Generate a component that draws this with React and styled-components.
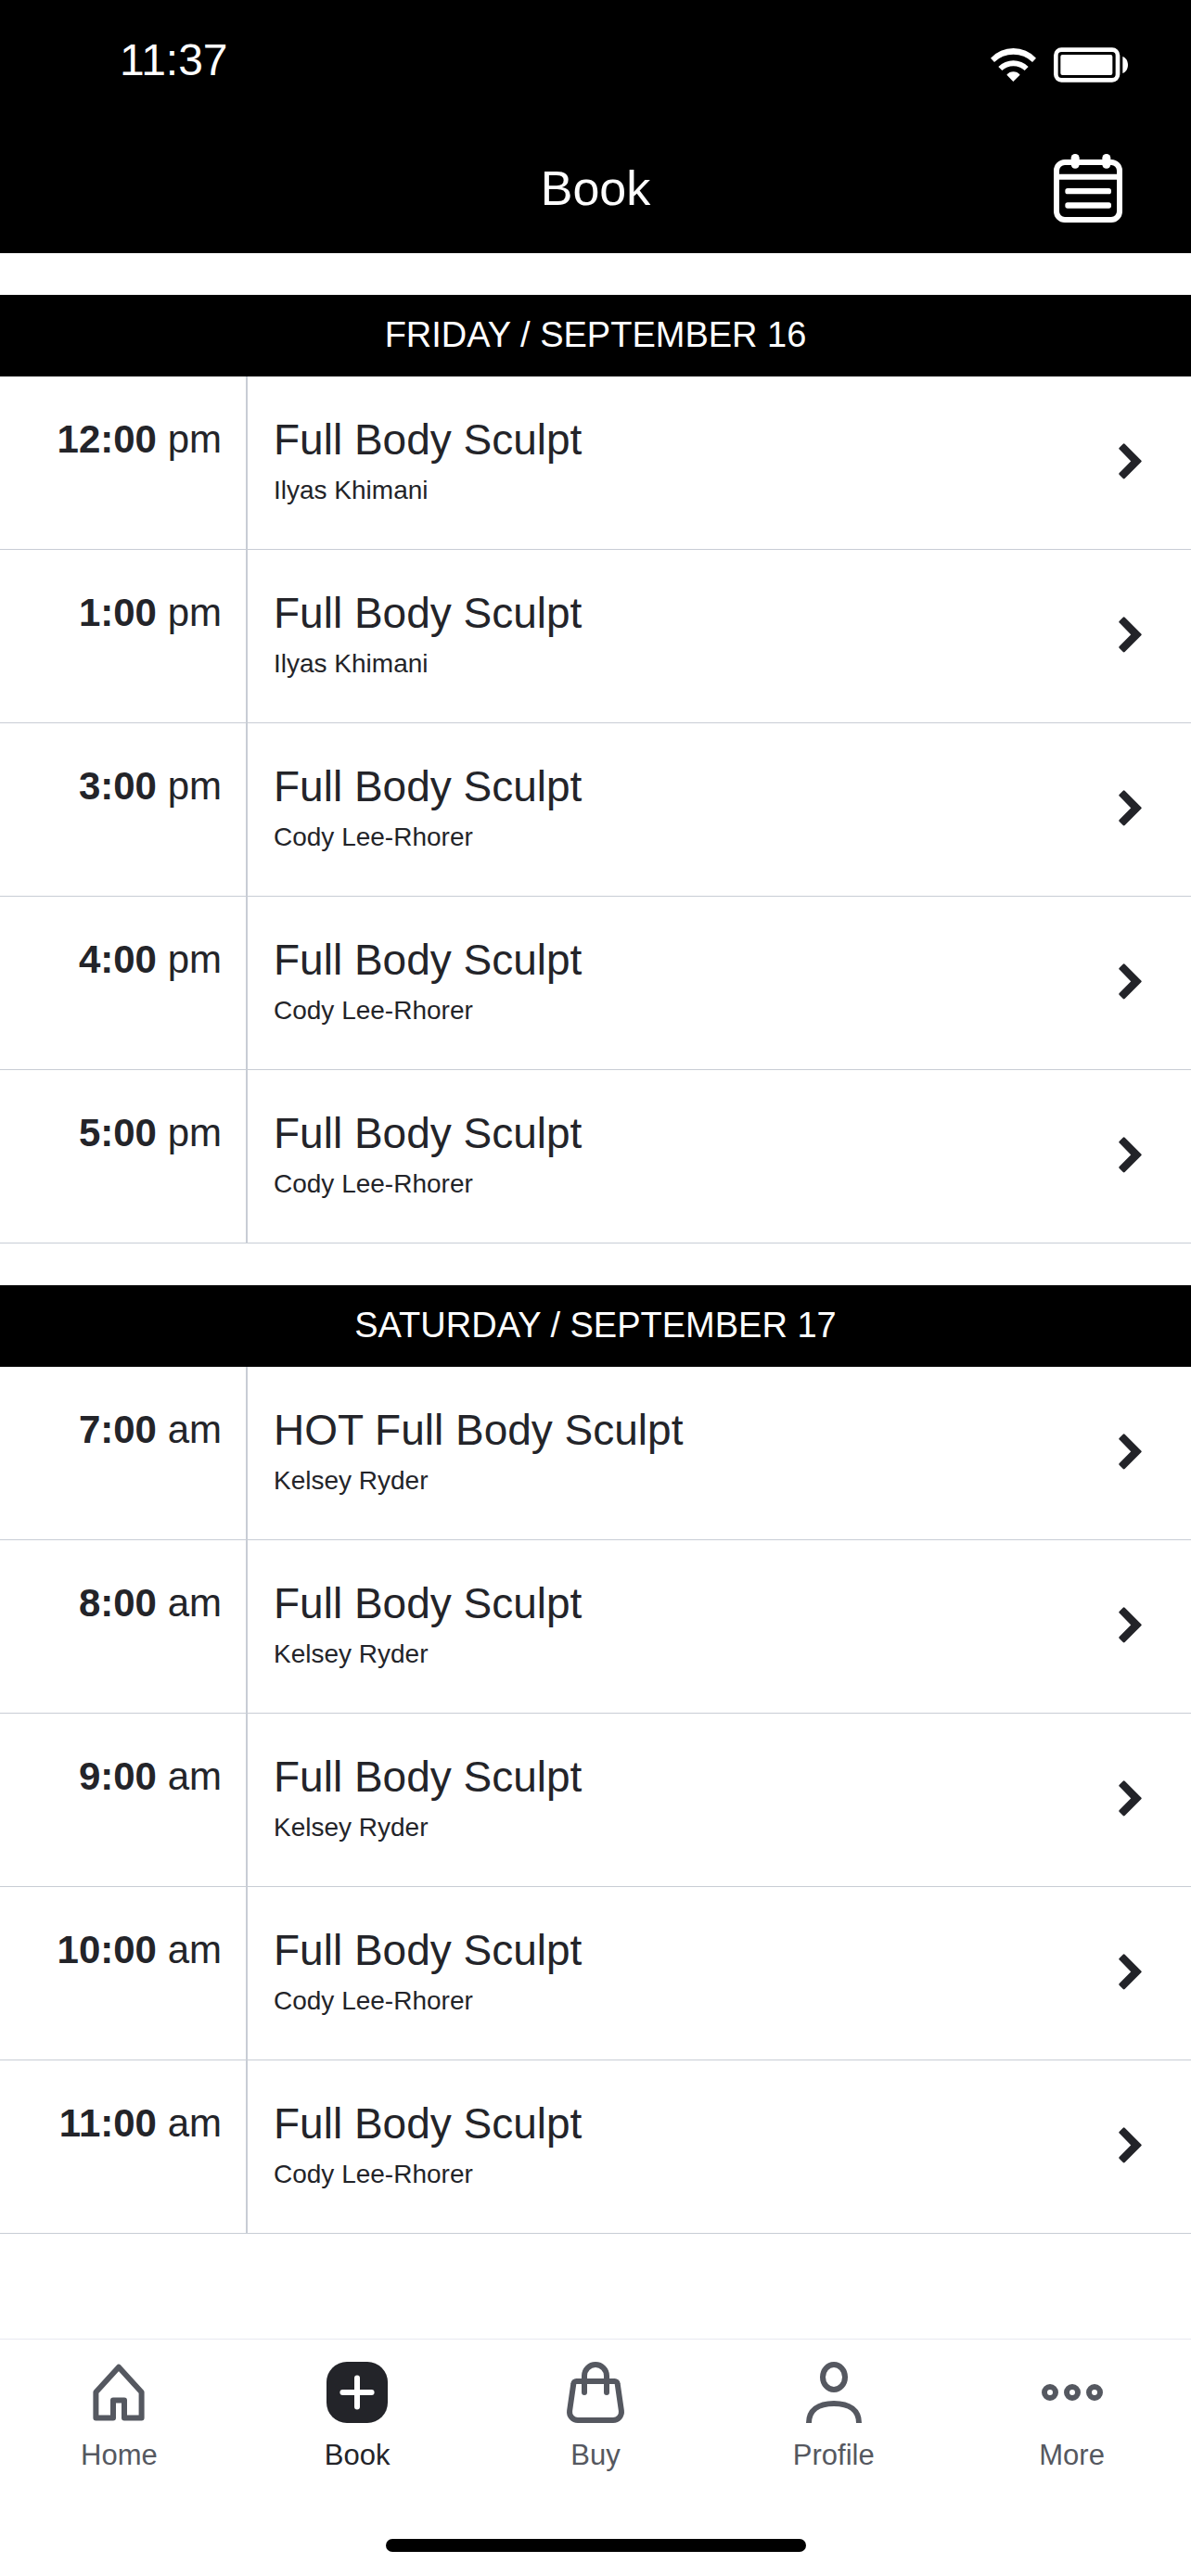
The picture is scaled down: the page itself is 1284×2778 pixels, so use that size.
import React from 'react'
import styled, { createGlobalStyle } from 'styled-components'

const Color = {
    black: '#000',
    white: '#fff',
    dark: '#232429',
    gray: '#555860',
    line: '#c8cdd5',
    lineLight: '#e8e9f1',
}

const schedule = [
    {
        day: 'Friday / September 16',
        classes: [
            { time: '12:00', period: 'pm', title: 'Full Body Sculpt', coach: 'Ilyas Khimani' },
            { time: '1:00', period: 'pm', title: 'Full Body Sculpt', coach: 'Ilyas Khimani' },
            { time: '3:00', period: 'pm', title: 'Full Body Sculpt', coach: 'Cody Lee-Rhorer' },
            { time: '4:00', period: 'pm', title: 'Full Body Sculpt', coach: 'Cody Lee-Rhorer' },
            { time: '5:00', period: 'pm', title: 'Full Body Sculpt', coach: 'Cody Lee-Rhorer' },
        ],
    },
    {
        day: 'Saturday / September 17',
        classes: [
            { time: '7:00', period: 'am', title: 'HOT Full Body Sculpt', coach: 'Kelsey Ryder' },
            { time: '8:00', period: 'am', title: 'Full Body Sculpt', coach: 'Kelsey Ryder' },
            { time: '9:00', period: 'am', title: 'Full Body Sculpt', coach: 'Kelsey Ryder' },
            { time: '10:00', period: 'am', title: 'Full Body Sculpt', coach: 'Cody Lee-Rhorer' },
            { time: '11:00', period: 'am', title: 'Full Body Sculpt', coach: 'Cody Lee-Rhorer' },
        ],
    },
]

const GlobalStyle = createGlobalStyle`
    * {
        box-sizing: border-box;
    }

    body {
        margin: 0;
        background: ${Color.white};
        color: ${Color.dark};
        font-family: "Liberation Sans", Arial, sans-serif;
    }

    svg {
        display: block;
    }
`

const Page = styled.div`
    min-height: 100vh;
    display: flex;
    flex-direction: column;
`

const Header = styled.header`
    background: ${Color.black};
    color: ${Color.white};
`

const StatusBar = styled.div`
    display: flex;
    justify-content: space-between;
    align-items: flex-start;
    padding: 38px 68px 0 129px;
`

const Clock = styled.span`
    font-size: 48px;
    line-height: 54px;
`

const StatusIcons = styled.div`
    display: flex;
    align-items: center;
    gap: 19px;
    padding-top: 13px;
`

const TitleBar = styled.div`
    display: grid;
    grid-template-columns: 1fr auto 1fr;
    align-items: center;
    padding: 74px 74px 33px;
`

const Title = styled.h1`
    grid-column: 2;
    margin: 0;
    font-size: 52px;
    font-weight: 400;
    line-height: 60px;
`

const IconButton = styled.button`
    justify-self: end;
    padding: 0;
    border: 0;
    background: none;
    color: inherit;
    cursor: pointer;
`

const Schedule = styled.main`
    flex: 1;
`

const Day = styled.section`
    padding-top: 45px;
`

const DayTitle = styled.h2`
    margin: 0;
    padding: 21px 0 23px;
    background: ${Color.black};
    color: ${Color.white};
    font-size: 38px;
    font-weight: 400;
    line-height: 44px;
    text-align: center;
    text-transform: uppercase;
`

const ClassList = styled.ul`
    margin: 0;
    padding: 0;
    list-style: none;
`

const ClassItem = styled.li`
    border-bottom: 1px solid ${Color.line};
`

const ClassLink = styled.a`
    display: flex;
    padding-right: 53px;
    color: inherit;
    text-decoration: none;
`

const Time = styled.div`
    flex: 0 0 267px;
    padding: 40px 26px 0 0;
    border-right: 2px solid ${Color.line};
    font-size: 42px;
    line-height: 56px;
    text-align: right;
`

const Info = styled.div`
    flex: 1;
    padding: 40px 28px 46px;
`

const ClassName = styled.div`
    font-size: 46px;
    line-height: 56px;
`

const Coach = styled.div`
    margin-top: 10px;
    font-size: 28px;
    line-height: 34px;
`

const Arrow = styled.span`
    padding-top: 72px;
`

const TabBar = styled.footer`
    border-top: 1px solid ${Color.lineLight};
    padding: 21px 0 26px;
`

const Tabs = styled.nav`
    display: flex;
`

const Tab = styled.a`
    flex: 1 1 0;
    display: flex;
    flex-direction: column;
    align-items: center;
    gap: 14px;
    color: ${({ $active }) => $active ? Color.dark : Color.gray};
    font-size: 31px;
    line-height: 36px;
    text-decoration: none;
`

const HomeIndicator = styled.div`
    width: 453px;
    max-width: 60%;
    height: 14px;
    margin: 72px auto 0;
    border-radius: 7px;
    background: ${Color.black};
`

const WifiIcon = () => (
    <svg width="49" height="36" viewBox="0 0 147 108" fill="currentColor" aria-hidden="true">
        <path d="M0 32A101 101 0 0 1 147 32L135 45A88 88 0 0 0 12 45Z" />
        <path d="M25 60A69 69 0 0 1 122 60L110 72A54 54 0 0 0 37 72Z" />
        <path d="M52 86A28 28 0 0 1 95 86L73 108Z" />
    </svg>
)

const BatteryIcon = () => (
    <svg width="80" height="38" viewBox="0 0 240 114" aria-hidden="true">
        <rect x="7" y="8" width="200" height="98" rx="18" fill="none" stroke="currentColor" strokeWidth="14" />
        <rect x="22" y="24" width="168" height="66" rx="6" fill="currentColor" />
        <path d="M223 30C233 33 240 44 240 57S233 81 223 84Z" fill="currentColor" />
    </svg>
)

const CalendarIcon = () => (
    <svg width="74" height="74" viewBox="0 0 222 222" fill="none" stroke="currentColor" strokeWidth="18" aria-hidden="true">
        <rect x="9" y="27" width="204" height="186" rx="27" />
        <path d="M18 74H204" />
        <g fill="currentColor" stroke="none">
            <rect x="56" y="0" width="27" height="47" rx="13" />
            <rect x="157" y="0" width="27" height="47" rx="13" />
            <rect x="37" y="111" width="149" height="19" rx="8" />
            <rect x="37" y="157" width="149" height="19" rx="8" />
        </g>
    </svg>
)

const ChevronIcon = () => (
    <svg width="25" height="39" viewBox="0 0 75 117" fill="currentColor" stroke="currentColor" strokeWidth="8" strokeLinejoin="round" aria-hidden="true">
        <path d="M17 5L70 58L17 111L5 99L45 58L5 17Z" />
    </svg>
)

const TabIcon = ({ children }) => (
    <svg width="72" height="72" viewBox="0 0 24 24" fill="none" stroke="currentColor" strokeWidth="2" strokeLinejoin="round" aria-hidden="true">
        {children}
    </svg>
)

const HomeIcon = () => (
    <TabIcon>
        <path d="M12 2.900L20.200 11.900V21.200H14V14.800H10V21.200H3.800V11.900Z" />
    </TabIcon>
)

const BookIcon = () => (
    <TabIcon>
        <rect x="1" y="1" width="22" height="22" rx="7.300" fill="currentColor" stroke="none" />
        <path d="M6.800 12H17.200M12 6.800V17.200" stroke={Color.white} strokeLinecap="round" />
    </TabIcon>
)

const BuyIcon = () => (
    <TabIcon>
        <path d="M5.100 8H18.900A1 1 0 0 1 19.900 8.900L21.300 18.600A3 3 0 0 1 18.300 22H5.700A3 3 0 0 1 2.700 18.600L4.100 8.900A1 1 0 0 1 5.100 8Z" />
        <path d="M8 12V6A4 4 0 0 1 16 6V12" strokeLinecap="round" />
    </TabIcon>
)

const ProfileIcon = () => (
    <TabIcon>
        <ellipse cx="12" cy="6.500" rx="4" ry="4.500" />
        <path d="M3 23C3 18.500 6.300 16 12 16S21 18.500 21 23" />
    </TabIcon>
)

const MoreIcon = () => (
    <TabIcon>
        <circle cx="4" cy="12" r="2" />
        <circle cx="12" cy="12" r="2" />
        <circle cx="20" cy="12" r="2" />
    </TabIcon>
)

const tabs = [
    { label: 'Home', Icon: HomeIcon },
    { label: 'Book', Icon: BookIcon, active: true },
    { label: 'Buy', Icon: BuyIcon },
    { label: 'Profile', Icon: ProfileIcon },
    { label: 'More', Icon: MoreIcon },
]

const App = () => {

    return (
        <Page>
            <GlobalStyle />

            <Header>
                <StatusBar>
                    <Clock>11:37</Clock>
                    <StatusIcons>
                        <WifiIcon />
                        <BatteryIcon />
                    </StatusIcons>
                </StatusBar>
                <TitleBar>
                    <Title>Book</Title>
                    <IconButton type="button" aria-label="Calendar">
                        <CalendarIcon />
                    </IconButton>
                </TitleBar>
            </Header>

            <Schedule>
                {schedule.map(({ day, classes }) => (
                    <Day key={day}>
                        <DayTitle>{day}</DayTitle>
                        <ClassList>
                            {classes.map(({ time, period, title, coach }) => (
                                <ClassItem key={time}>
                                    <ClassLink href="#class">
                                        <Time><b>{time}</b> {period}</Time>
                                        <Info>
                                            <ClassName>{title}</ClassName>
                                            <Coach>{coach}</Coach>
                                        </Info>
                                        <Arrow><ChevronIcon /></Arrow>
                                    </ClassLink>
                                </ClassItem>
                            ))}
                        </ClassList>
                    </Day>
                ))}
            </Schedule>

            <TabBar>
                <Tabs>
                    {tabs.map(({ label, Icon, active }) => (
                        <Tab key={label} href={`#${label.toLowerCase()}`} $active={active} aria-current={active ? 'page' : undefined}>
                            <Icon />
                            <span>{label}</span>
                        </Tab>
                    ))}
                </Tabs>
                <HomeIndicator />
            </TabBar>
        </Page>
    )
}

export default App
